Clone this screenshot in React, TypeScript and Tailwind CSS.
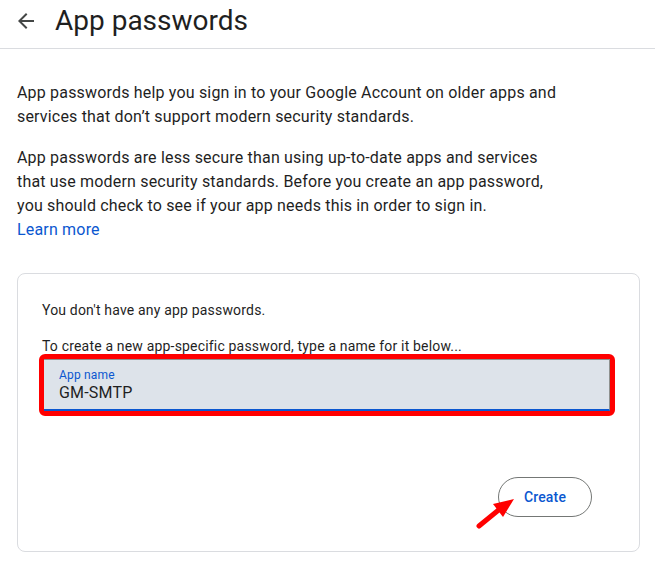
import React from "react";

const ArrowBackIcon = () => (
  <svg width="24" height="24" viewBox="0 0 24 24" fill="#444746">
    <path d="M20 11H7.83l5.59-5.59L12 4l-8 8 8 8 1.41-1.41L7.83 13H20v-2z" />
  </svg>
);

const App: React.FC = () => {
  return (
    <div
      className="relative w-[655px] h-[570px] bg-white text-[#1f1f1f] overflow-hidden"
      style={{ fontFamily: "Roboto, 'Liberation Sans', sans-serif" }}
    >
      {/* Header */}
      <div className="h-[49px] flex items-center border-b border-[#dadce0]">
        <div className="ml-[14px] -mt-[6px]">
          <ArrowBackIcon />
        </div>
        <h1 className="ml-[17px] -mt-[6px] text-[28px] leading-9 font-normal text-[#1f1f1f]">
          App passwords
        </h1>
      </div>

      {/* Body */}
      <div className="px-[17px] pt-[32px] tracking-[0.18px]">
        <p className="text-base leading-6">
          App passwords help you sign in to your Google Account on older apps and
          <br />
          services that don’t support modern security standards.
        </p>
        <p className="mt-[17px] text-base leading-6">
          App passwords are less secure than using up-to-date apps and services
          <br />
          that use modern security standards. Before you create an app password,
          <br />
          you should check to see if your app needs this in order to sign in.
          <br />
          <a className="text-[#0b57d0]">Learn more</a>
        </p>

        {/* Card */}
        <div className="mt-[31px] w-[623px] h-[279px] border border-[#dadce0] rounded-lg pt-[26px] px-6">
          <p className="text-sm leading-5">You don't have any app passwords.</p>
          <p className="mt-4 text-sm leading-5">
            To create a new app-specific password, type a name for it below...
          </p>

          <div className="-mt-[2px] -ml-[3px] border-[5px] border-[#ff0000] rounded-[6px]">
            <div className="h-[52px] bg-[#dde3ea] border-t border-r border-[#8e918f] border-b-2 border-b-[#0b57d0] pl-[15px] pt-[7px]">
              <div className="text-xs leading-4 text-[#0b57d0]">App name</div>
              <div className="text-base leading-5 text-[#1f1f1f]">GM-SMTP</div>
            </div>
          </div>

          <div className="flex justify-end pr-[23px] mt-[61px]">
            <button className="w-[94px] h-10 rounded-full border border-[#747775] text-sm font-medium text-[#0b57d0]">
              Create
            </button>
          </div>
        </div>
      </div>

      {/* Red annotation arrow */}
      <svg
        className="absolute left-[470px] top-[494px]"
        width="50"
        height="40"
        viewBox="0 0 50 40"
      >
        <line
          x1="9"
          y1="32"
          x2="31"
          y2="14"
          stroke="#ff0000"
          strokeWidth="5"
          strokeLinecap="round"
        />
        <polygon points="44,5 23,10 33,23" fill="#ff0000" />
      </svg>
    </div>
  );
};

export default App;
